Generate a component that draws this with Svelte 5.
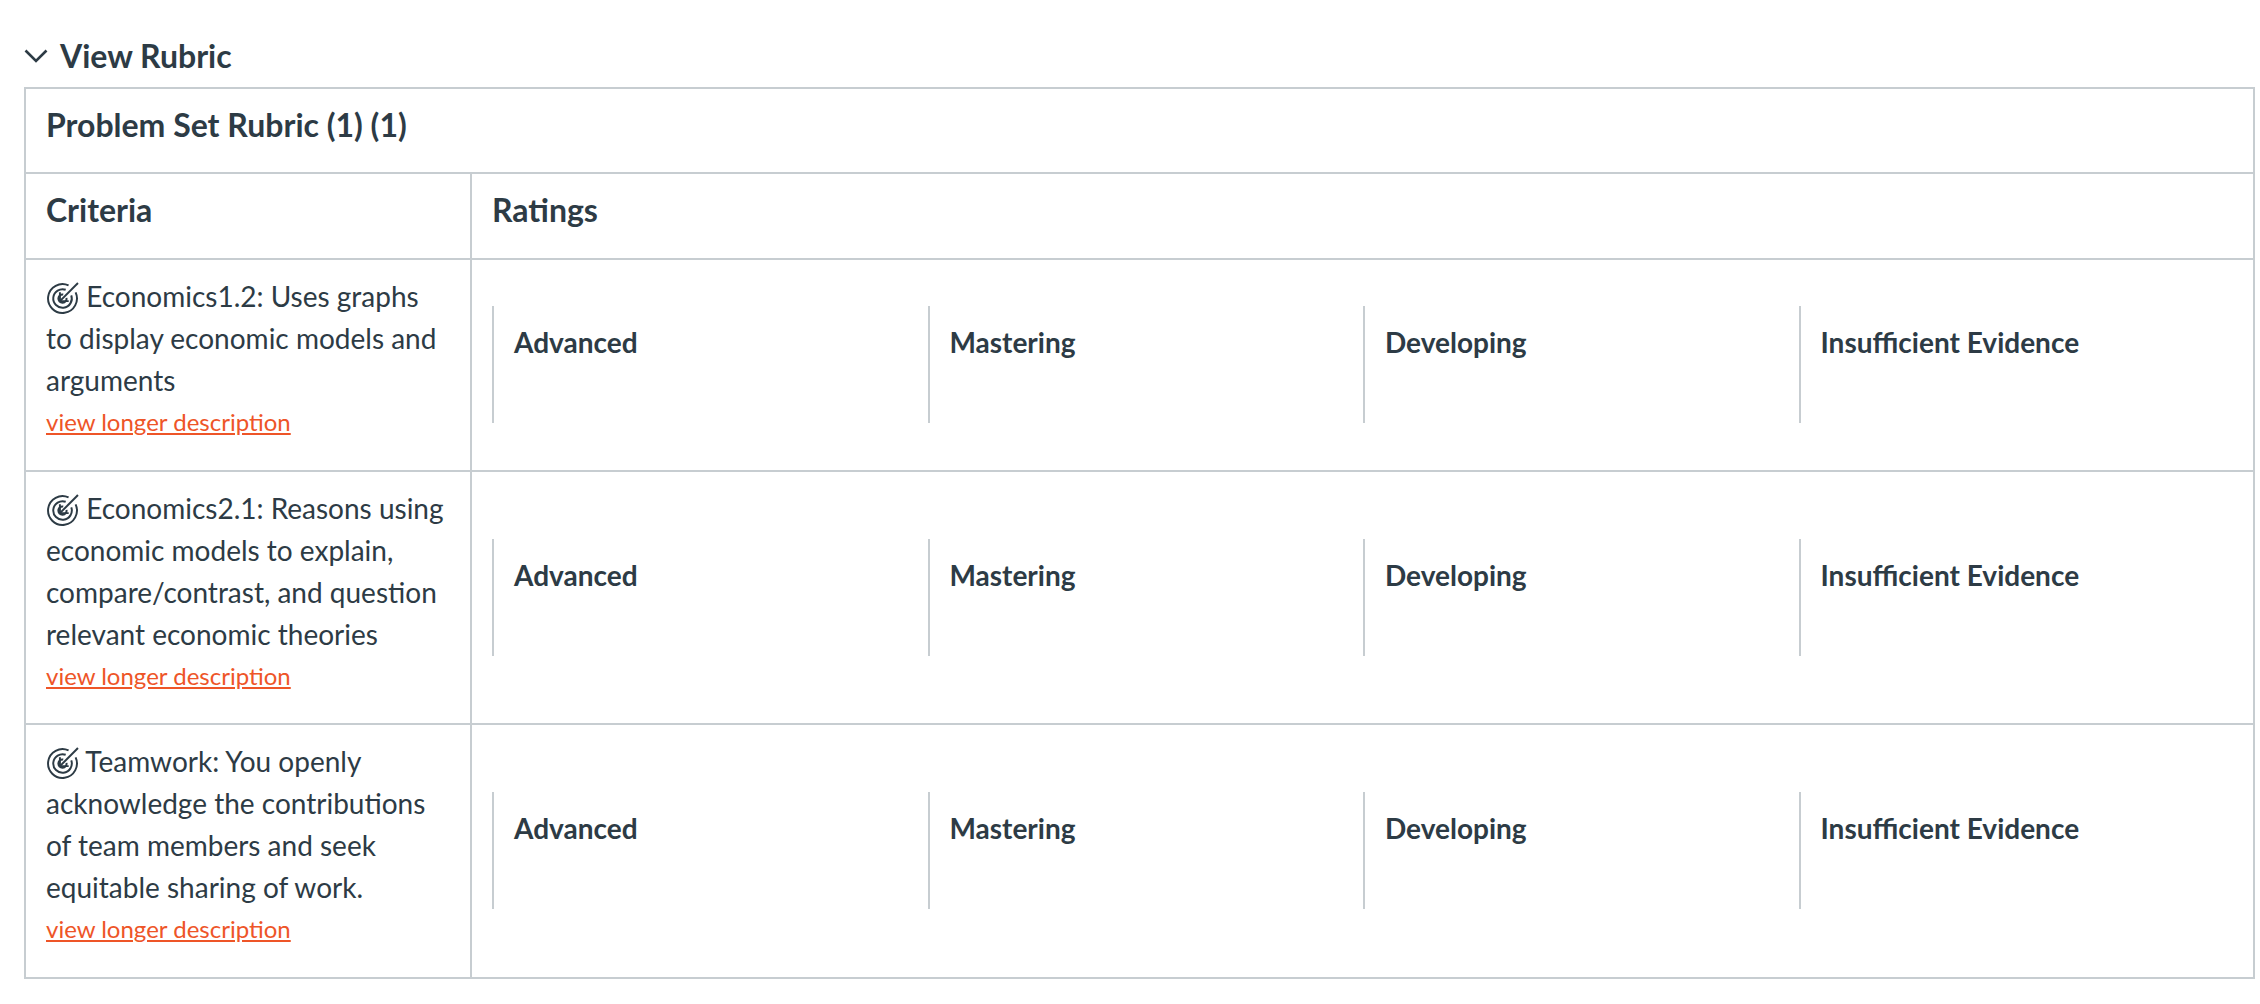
<script>
    const ratings = ['Advanced', 'Mastering', 'Developing', 'Insufficient Evidence'];
    const criteria = [
        'Economics1.2: Uses graphs to display economic models and arguments',
        'Economics2.1: Reasons using economic models to explain, compare/contrast, and question relevant economic theories',
        'Teamwork: You openly acknowledge the contributions of team members and seek equitable sharing of work.'
    ];
</script>

<div class="page">
    <div class="toggle">
        <svg class="chevron" viewBox="0 0 24 14" aria-hidden="true">
            <path d="M1.5 1.5 12 12 22.5 1.5" />
        </svg>
        <span>View Rubric</span>
    </div>

    <table>
        <colgroup>
            <col class="col-criteria" />
            <col />
        </colgroup>
        <thead>
            <tr>
                <th colspan="2" class="title">Problem Set Rubric (1) (1)</th>
            </tr>
            <tr>
                <th class="head">Criteria</th>
                <th class="head">Ratings</th>
            </tr>
        </thead>
        <tbody>
            {#each criteria as text}
                <tr>
                    <td class="criterion">
                        <svg class="outcome" viewBox="0 0 32 32" aria-hidden="true">
                            <path d="M21.9 4.3A14 14 0 1 0 28.7 11.1" />
                            <path d="M19.1 8.5A9 9 0 1 0 24.5 13.9" />
                            <path d="M16.7 13.1A4 4 0 1 0 19.9 16.3" />
                            <path d="M13.5 19.5 31 2" />
                            <path d="M13.5 11V19.5H22" />
                        </svg>
                        {text}
                        <a href="#top" class="more">view longer description</a>
                    </td>
                    <td class="ratings">
                        <div class="tiers">
                            {#each ratings as name}
                                <div class="tier">{name}</div>
                            {/each}
                        </div>
                    </td>
                </tr>
            {/each}
        </tbody>
    </table>
</div>

<style>
    :global(body) {
        background: #fff;
    }

    .page {
        padding: 33px 5px 0 24px;
        font-family: Lato, "Liberation Sans", sans-serif;
        color: #2d3b45;
    }

    .toggle {
        display: flex;
        align-items: center;
        gap: 12px;
        height: 45px;
        margin-bottom: 9px;
        font-size: 32px;
        font-weight: 700;
    }

    .chevron {
        width: 24px;
        height: 14px;
        fill: none;
        stroke: #2d3b45;
        stroke-width: 2.6;
    }

    table {
        width: 100%;
        border-collapse: collapse;
        table-layout: fixed;
    }

    .col-criteria {
        width: 446px;
    }

    th, td {
        border: 2px solid #c7cdd1;
        text-align: left;
        padding: 0;
        box-sizing: border-box;
    }

    th {
        font-size: 32px;
        font-weight: 700;
        line-height: 42px;
        height: 85px;
        padding: 15px 20px 0;
        vertical-align: top;
    }

    th.head {
        height: 86px;
    }

    .criterion {
        padding: 15px 20px 26.5px;
        font-size: 28px;
        line-height: 42px;
        vertical-align: top;
    }

    .outcome {
        width: 33px;
        height: 33px;
        vertical-align: -7px;
        fill: none;
        stroke: #2d3b45;
        stroke-width: 1.9;
    }

    .more {
        display: block;
        font-size: 24px;
        color: #ee5528;
        text-decoration: underline;
    }

    .ratings {
        padding: 0 19px 0 20px;
        vertical-align: middle;
    }

    .tiers {
        display: flex;
    }

    .tier {
        flex: 1;
        height: 117px;
        padding: 15px 20px 0;
        box-sizing: border-box;
        border-left: 2px solid #c7cdd1;
        font-size: 28px;
        font-weight: 700;
        line-height: 42px;
    }
</style>
